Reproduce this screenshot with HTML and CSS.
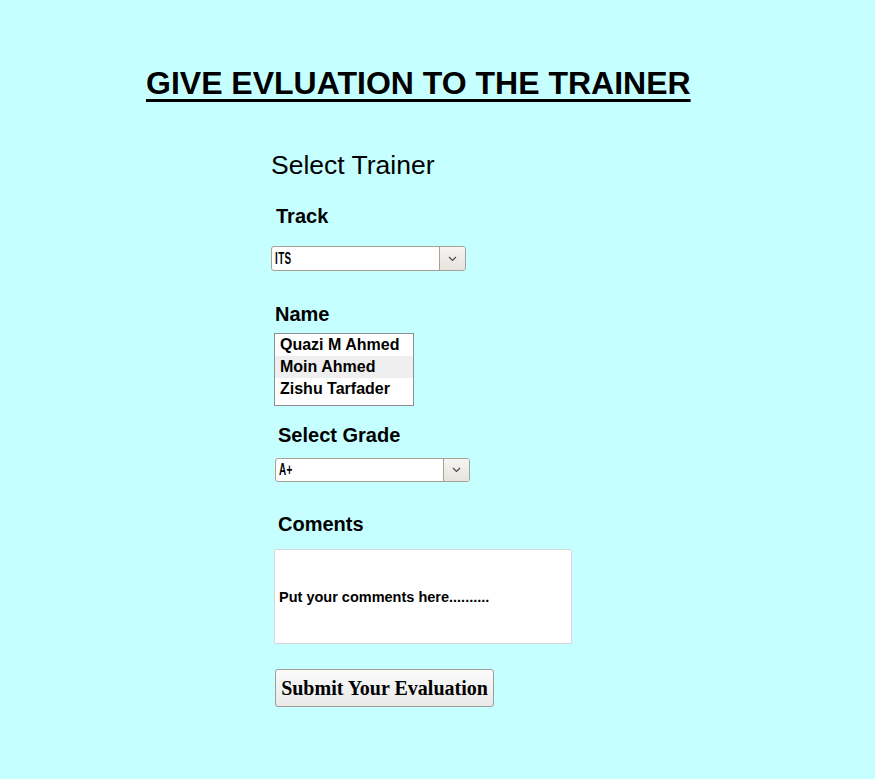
FILE: index.html
```html
<!DOCTYPE html>
<html lang="en">
<head>
<meta charset="utf-8">
<title>Give Evaluation</title>
<link rel="stylesheet" href="styles.css">
</head>
<body>
<h1 class="title">GIVE EVLUATION TO THE TRAINER</h1>
<form class="form">
  <h2 class="subtitle">Select Trainer</h2>
  <h3 class="label label-track">Track</h3>
  <div class="select-box select-track">
    <span class="select-value">ITS</span>
    <span class="select-arrow"><svg width="9" height="6" viewBox="0 0 9 6"><path d="M1 1 L4.5 4.5 L8 1" fill="none" stroke="#444" stroke-width="1.1"/></svg></span>
  </div>
  <h3 class="label label-name">Name</h3>
  <div class="listbox">
    <div class="option">Quazi M Ahmed</div>
    <div class="option option-active">Moin Ahmed</div>
    <div class="option">Zishu Tarfader</div>
  </div>
  <h3 class="label label-grade">Select Grade</h3>
  <div class="select-box select-grade">
    <span class="select-value">A+</span>
    <span class="select-arrow"><svg width="9" height="6" viewBox="0 0 9 6"><path d="M1 1 L4.5 4.5 L8 1" fill="none" stroke="#444" stroke-width="1.1"/></svg></span>
  </div>
  <h3 class="label label-comments">Coments</h3>
  <input class="comments" type="text" value="Put your comments here..........">
  <button class="submit" type="button">Submit Your Evaluation</button>
</form>
</body>
</html>
```
FILE: styles.css
```css
html, body {
  margin: 0;
  padding: 0;
}
body {
  background: #c6ffff;
  font-family: "Liberation Sans", Arial, sans-serif;
  color: #000;
  padding-top: 65px;
  min-height: 779px;
  box-sizing: border-box;
}
.title {
  margin: 0 0 0 146px;
  font-size: 32px;
  line-height: 36px;
  font-weight: bold;
  text-decoration: underline;
  text-decoration-thickness: 3px;
  text-underline-offset: 5px;
}
.form {
  margin: 49px 0 0 271px;
  display: flex;
  flex-direction: column;
  align-items: flex-start;
}
.subtitle {
  margin: 0;
  font-size: 26.5px;
  line-height: 30px;
  font-weight: normal;
}
.label {
  margin: 0;
  font-size: 20px;
  line-height: 23px;
  font-weight: bold;
}
.label-track { margin: 25px 0 0 5px; }
.label-name { margin: 32px 0 0 4px; }
.label-grade { margin: 18px 0 0 7px; }
.label-comments { margin: 31px 0 0 7px; }

.select-box {
  display: flex;
  align-items: stretch;
  width: 195px;
  height: 25px;
  box-sizing: border-box;
  border: 1px solid #a99f93;
  border-radius: 3px;
  background: #fff;
  overflow: hidden;
}
.select-track { margin-top: 18px; }
.select-grade { margin: 11px 0 0 4px; height: 24px; }
.select-value {
  flex: 1;
  display: flex;
  align-items: center;
  padding-left: 5px;
  font-family: "Liberation Sans", Arial, sans-serif;
  font-weight: bold;
  font-size: 16px;
  letter-spacing: 0.5px;
  transform: scaleX(0.62);
  transform-origin: left center;
}
.select-arrow {
  width: 25px;
  display: flex;
  align-items: center;
  justify-content: center;
  border-left: 1px solid #a99f93;
  background: linear-gradient(#f6f5f3, #e6e3de);
}

.listbox {
  margin: 7px 0 0 3px;
  width: 140px;
  height: 73px;
  box-sizing: border-box;
  border: 1px solid #8f8f8f;
  background: #fff;
}
.option {
  height: 22px;
  line-height: 22px;
  padding-left: 5px;
  font-size: 16px;
  font-weight: bold;
  white-space: nowrap;
}
.option-active { background: #efefef; }

.comments {
  margin: 13px 0 0 3px;
  width: 298px;
  height: 95px;
  box-sizing: border-box;
  border: 1px solid #d6d6d6;
  border-radius: 2px;
  background: #fff;
  padding: 0 4px;
  font-family: "Liberation Sans", Arial, sans-serif;
  font-size: 14.5px;
  font-weight: bold;
  color: #000;
  outline: none;
}
.submit {
  margin: 25px 0 0 4px;
  width: 219px;
  height: 38px;
  box-sizing: border-box;
  border: 1px solid #a39c92;
  border-radius: 3px;
  background: linear-gradient(#fbfbfb, #e9e9e9);
  font-family: "Liberation Serif", "Times New Roman", serif;
  font-size: 20px;
  font-weight: bold;
  color: #000;
  padding: 0 4px;
  white-space: nowrap;
}
```
